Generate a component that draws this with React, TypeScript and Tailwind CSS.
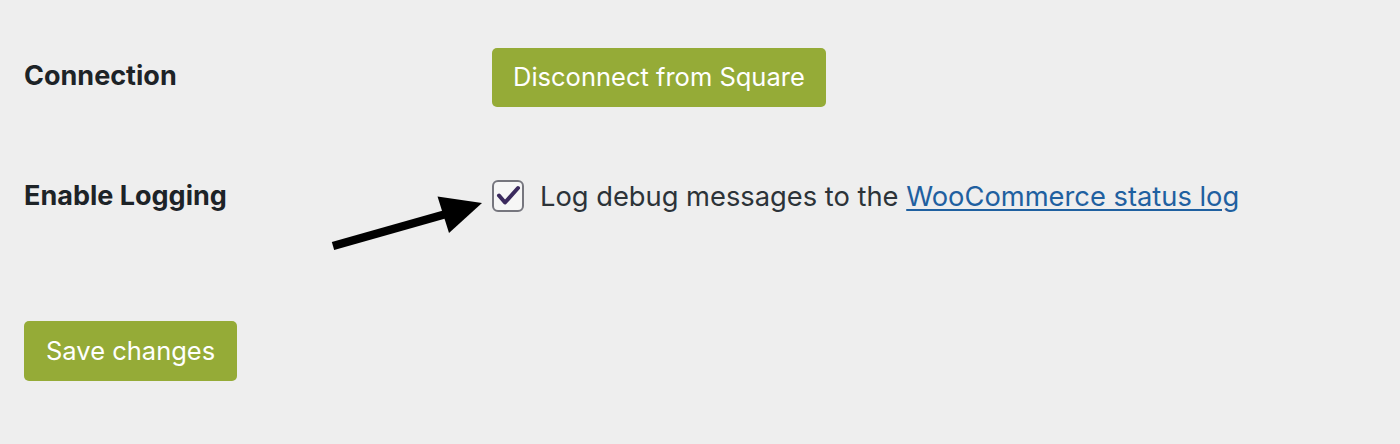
import React from "react";

export default function App() {
  return (
    <div className="min-h-screen w-full bg-[#eeeeee] font-['Inter',sans-serif] text-[#1d2327]">
      <div className="pl-6 pt-12">
        {/* Connection */}
        <div className="flex items-start">
          <div className="w-[468px] pt-[12px] text-[27px] leading-[32px] font-bold">Connection</div>
          <button className="h-[59px] rounded-[5px] bg-[#95ab37] px-[21px] text-[25.5px] text-white">
            Disconnect from Square
          </button>
        </div>

        {/* Enable Logging */}
        <div className="mt-[73px] flex h-[32px] items-center">
          <div className="w-[468px] text-[27px] leading-[32px] font-bold">Enable Logging</div>
          <div className="relative h-[32px] w-[32px]">
            <Arrow />
            <span className="flex h-[32px] w-[32px] items-center justify-center rounded-[6px] border-2 border-[#76767e] bg-[#f6f6f6]">
              <svg width="28" height="28" viewBox="0 0 28 28">
                <path d="M5 13.5 L11 20.5 L24 6" fill="none" stroke="#3b2a5e" strokeWidth="4" strokeLinecap="round" strokeLinejoin="round" />
              </svg>
            </span>
          </div>
          <span className="ml-4 pt-[2px] text-[27.3px] leading-[32px] text-[#2c3338]">
            Log debug messages to the{" "}
            <a href="#" className="text-[#1f60a0] underline underline-offset-[3px]">
              WooCommerce status log
            </a>
          </span>
        </div>

        {/* Save */}
        <button className="mt-[109px] h-[60px] rounded-[5px] bg-[#95ab37] px-[22px] text-[25.5px] text-white">
          Save changes
        </button>
      </div>
    </div>
  );
}

function Arrow() {
  return (
    <svg
      className="absolute left-[-162px] top-[-10px]"
      width="160"
      height="90"
      viewBox="0 0 160 90"
    >
      <line x1="3" y1="76" x2="116" y2="44" stroke="#000" strokeWidth="8.5" />
      <polygon points="152,33 107.5,26.5 119,63" fill="#000" />
    </svg>
  );
}
